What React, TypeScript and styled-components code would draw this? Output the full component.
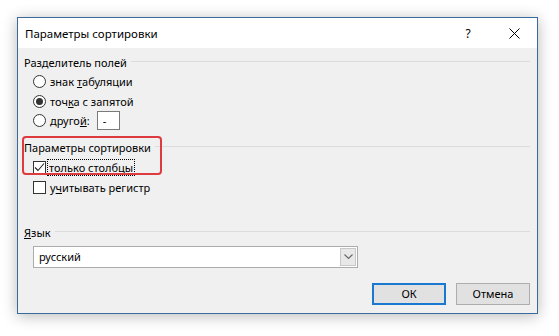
import React from "react";
import styled, { createGlobalStyle } from "styled-components";

const GlobalStyle = createGlobalStyle`
  html, body {
    margin: 0;
    padding: 0;
    background: #ffffff;
  }
  body {
    font-family: "Noto Sans", "Open Sans", sans-serif;
    font-size: 11px;
    line-height: 15px;
    color: #000;
  }
`;

const Desktop = styled.div`
  width: 559px;
  height: 336px;
  padding: 17px 0 0 17px;
  box-sizing: border-box;
`;

const Window = styled.div`
  width: 521px;
  height: 297px;
  box-sizing: border-box;
  border: 1px solid #3a6a9c;
  box-shadow: 0 2px 14px rgba(0, 0, 0, 0.28);
  background: #f0f0f0;
  display: flex;
  flex-direction: column;
`;

const TitleBar = styled.div`
  height: 30px;
  flex-shrink: 0;
  background: #ffffff;
  display: flex;
  align-items: center;
  padding-left: 7px;
  font-size: 11.5px;
`;

const Title = styled.div`
  flex: 1;
`;

const TitleButton = styled.div`
  width: 46px;
  height: 30px;
  display: flex;
  align-items: center;
  justify-content: center;
  font-size: 12px;
`;

const Content = styled.div`
  flex: 1;
  padding: 4px 7px 0 6px;
  display: flex;
  flex-direction: column;
`;

const GroupHeader = styled.div<{ $gap?: number }>`
  display: flex;
  align-items: center;
  height: 20px;
  gap: 4px;
  white-space: nowrap;
  margin-top: ${(p) => p.$gap ?? 0}px;
  &::after {
    content: "";
    flex: 1;
    height: 1px;
    background: #dcdcdc;
    margin-top: -2px;
  }
`;

const Options = styled.div`
  display: flex;
  flex-direction: column;
  padding-left: 9px;
`;

const OptionRow = styled.label<{ $h?: number }>`
  display: flex;
  align-items: center;
  height: ${(p) => p.$h ?? 19.5}px;
  gap: 4px;
  white-space: nowrap;
`;

const Radio = styled.span<{ $on?: boolean }>`
  width: 13px;
  height: 13px;
  box-sizing: border-box;
  border: 1px solid #333;
  border-radius: 50%;
  background: #fff;
  display: flex;
  align-items: center;
  justify-content: center;
  &::after {
    content: "";
    display: ${(p) => (p.$on ? "block" : "none")};
    width: 7px;
    height: 7px;
    border-radius: 50%;
    background: #333;
  }
`;

const Box = styled.span`
  width: 13px;
  height: 13px;
  box-sizing: border-box;
  border: 1px solid #333;
  background: #fff;
  display: flex;
  align-items: center;
  justify-content: center;
`;

const U = styled.span`
  text-decoration: underline;
`;

const Focus = styled.span`
  outline: 1px dotted #000;
  outline-offset: 0;
  padding: 0 1px;
  margin-left: -2px;
`;

const SmallInput = styled.div`
  width: 23px;
  height: 19px;
  box-sizing: border-box;
  border: 1px solid #7a7a7a;
  background: #fff;
  margin-left: 3px;
  padding-left: 5px;
  display: flex;
  align-items: center;
`;

/* red annotation frame drawn over the sort options group */
const Highlighted = styled.div`
  position: relative;
  margin-top: 7px;
  &::after {
    content: "";
    position: absolute;
    left: -2px;
    top: -2px;
    width: 140px;
    height: 39px;
    box-sizing: border-box;
    border: 2px solid #dd3b3f;
    border-radius: 4px;
    pointer-events: none;
  }
`;

const Select = styled.div`
  margin: 3px 0 0 9px;
  width: 325px;
  height: 22px;
  box-sizing: border-box;
  border: 1px solid #acacac;
  background: #fff;
  display: flex;
  align-items: center;
`;

const SelectText = styled.div`
  flex: 1;
  padding-left: 5px;
`;

const SelectButton = styled.div`
  width: 16px;
  height: 18px;
  margin-right: 1px;
  background: #e8e8e8;
  border: 1px solid #c8c8c8;
  box-sizing: border-box;
  display: flex;
  align-items: center;
  justify-content: center;
`;

const Footer = styled.div`
  display: flex;
  justify-content: flex-end;
  gap: 10px;
  margin-top: 15px;
`;

const Button = styled.div<{ $default?: boolean }>`
  width: 74px;
  height: 22px;
  box-sizing: border-box;
  border: ${(p) => (p.$default ? "2px solid #1a78d0" : "1px solid #adadad")};
  background: #e1e1e1;
  display: flex;
  align-items: center;
  justify-content: center;
`;

export default function App() {
  return (
    <>
      <GlobalStyle />
      <Desktop>
        <Window>
          <TitleBar>
            <Title>Параметры сортировки</Title>
            <TitleButton>?</TitleButton>
            <TitleButton>
              <svg width="11" height="11" viewBox="0 0 11 11">
                <path d="M0.5 0.5 L10.5 10.5 M10.5 0.5 L0.5 10.5" stroke="#000" strokeWidth="1" />
              </svg>
            </TitleButton>
          </TitleBar>
          <Content>
            <GroupHeader>Разделитель полей</GroupHeader>
            <Options>
              <OptionRow>
                <Radio />
                <span>
                  знак <U>т</U>абуляции
                </span>
              </OptionRow>
              <OptionRow>
                <Radio $on />
                <span>
                  точ<U>к</U>а с запятой
                </span>
              </OptionRow>
              <OptionRow>
                <Radio />
                <span>
                  друго<U>й</U>:
                </span>
                <SmallInput>-</SmallInput>
              </OptionRow>
            </Options>
            <Highlighted>
              <GroupHeader>Параметры сортировки</GroupHeader>
              <Options>
                <OptionRow $h={20}>
                  <Box>
                    <svg width="11" height="11" viewBox="0 0 11 11">
                      <path d="M1 5.5 L4 8.5 L10 1.5" fill="none" stroke="#222" strokeWidth="1.1" />
                    </svg>
                  </Box>
                  <Focus>
                    т<U>о</U>лько столбцы
                  </Focus>
                </OptionRow>
                <OptionRow $h={20}>
                  <Box />
                  <span>
                    у<U>ч</U>итывать регистр
                  </span>
                </OptionRow>
              </Options>
            </Highlighted>
            <GroupHeader $gap={25}>
              <span>
                <U>Я</U>зык
              </span>
            </GroupHeader>
            <Select>
              <SelectText>русский</SelectText>
              <SelectButton>
                <svg width="9" height="6" viewBox="0 0 9 6">
                  <path d="M0.5 0.5 L4.5 4.5 L8.5 0.5" fill="none" stroke="#666" strokeWidth="1.1" />
                </svg>
              </SelectButton>
            </Select>
            <Footer>
              <Button $default>ОК</Button>
              <Button>Отмена</Button>
            </Footer>
          </Content>
        </Window>
      </Desktop>
    </>
  );
}
